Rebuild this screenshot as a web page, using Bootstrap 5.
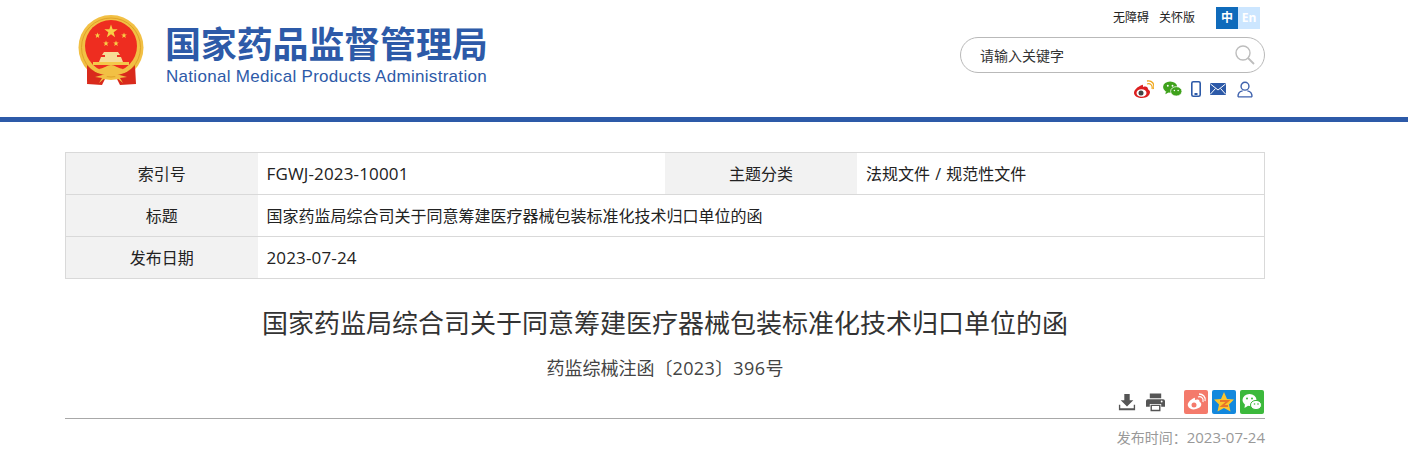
<!DOCTYPE html>
<html lang="zh-CN">
<head>
<meta charset="UTF-8">
<title>国家药品监督管理局</title>
<link href="https://cdn.jsdelivr.net/npm/bootstrap@5.3.3/dist/css/bootstrap.min.css" rel="stylesheet">
<style>
body { font-family: "Open Sans", "Noto Sans CJK SC", sans-serif; color: #333; background: #fff; overflow: hidden; }
.site-head { height: 122px; border-bottom: 5px solid #2d5aa8; }
.wrap { width: 1200px; margin-left: 65px; }
.head-inner { height: 117px; }
.emblem { margin-left: 13px; margin-top: 15px; }
.brand { margin-left: 21px; margin-top: 20px; color: #2d5aa8; }
.brand-cn { font-family: "Noto Sans CJK SC", sans-serif; font-weight: 700; font-size: 36px; line-height: 44px; width: 330px; white-space: nowrap; letter-spacing: -.15px; }
.brand-en { font-family: "Liberation Sans", sans-serif; font-size: 17px; line-height: 20px; letter-spacing: .3px; margin: 3px 0 0 1px; white-space: nowrap; }
.head-right { width: 305px; }
.top-links { height: 37px; padding-top: 7px; padding-right: 5px; font-size: 12px; line-height: 22px; color: #222; }
.top-links a { color: #222; text-decoration: none; margin-right: 10px; }
.lang { margin-left: 11px; display: flex; font-size: 12px; }
.lang span { width: 22px; height: 22px; text-align: center; }
.lang-on { background: #0f6bbb; color: #fff; font-weight: 700; }
.lang-off { background: #cce6ff; color: #fff; font-weight: 700; }
.search-box { height: 36px; border: 1px solid #b9b9b9; border-radius: 18px; padding: 0 9px 0 19px; font-size: 14px; color: #333; }
.head-icons { margin-top: 6px; padding-right: 12px; height: 20px; gap: 9px; }
.user-ico { margin-left: 2px; }
.info-tbl { margin-top: 30px; margin-bottom: 0; border-color: #d9d9d9; font-size: 16px; color: #222; table-layout: fixed; }
.info-tbl td, .info-tbl th { height: 42px; padding: 0 9px; vertical-align: middle; font-weight: 400; border-color: #d9d9d9; border-left-width: 0; border-right-width: 0; }
.info-tbl th { background: #f2f2f2; text-align: center; width: 192px; }
.info-tbl tr > :first-child { border-left-width: 1px; }
.info-tbl tr > :last-child { border-right-width: 1px; }
.num-val { font-size: 17px; letter-spacing: .15px; }
.cat-val { word-spacing: 1px; }
.art-title { font-family: "Noto Sans CJK SC", sans-serif; font-size: 26px; line-height: 36px; font-weight: 400; color: #333; margin: 25px 0 0; text-align: center; }
.art-num { font-size: 18px; line-height: 26px; color: #444; margin-top: 15px; text-align: center; }
.art-digits { letter-spacing: .45px; }
.tool-row { margin-top: 9px; padding-bottom: 4px; padding-right: 1px; border-bottom: 1px solid #a8a8a8; box-sizing: content-box; height: 24px; }
.print-ico { margin-left: 10px; margin-right: 19px; }
.share-ico { margin-left: 4px; }
.pub-time { font-size: 14px; line-height: 20px; color: #999; margin-top: 8px; text-align: right; }
.pub-date { font-size: 15px; }
</style>
</head>
<body>
<div class="site-head">
  <div class="wrap head-inner d-flex justify-content-between">
    <div class="d-flex align-items-start">
      <svg class="emblem" width="66" height="71" viewBox="0 0 66 71">
        <defs><polygon id="star" points="0,-1 .235,-.324 .951,-.309 .38,.124 .588,.809 0,.4 -.588,.809 -.38,.124 -.951,-.309 -.235,-.324"/></defs>
        <path d="M10 50 L9 69 L24 70 L28 62 L38 62 L42 70 L58 69 L57 50 Z" fill="#d92a1c"/>
        <circle cx="33" cy="32.500" r="32.500" fill="#f2c044"/>
        <circle cx="33" cy="32.500" r="29.500" fill="none" stroke="#dfa228" stroke-width="1"/>
        <circle cx="33" cy="31" r="26" fill="#ee2d20"/>
        <g fill="#f8d046">
          <use href="#star" transform="translate(33,16.500) scale(7)"/>
          <use href="#star" transform="translate(19.500,20.500) scale(3)"/>
          <use href="#star" transform="translate(46,20.500) scale(3)"/>
          <use href="#star" transform="translate(28,28.500) scale(3)"/>
          <use href="#star" transform="translate(38,28.500) scale(3)"/>
        </g>
        <path d="M26 37 H40 L42 40 H39 V42 H43 L45 47 H21 L23 42 H27 V40 H24 Z" fill="#f6dc96"/>
        <rect x="15" y="47" width="36" height="3" fill="#f4c84a"/>
        <path d="M9 50 C14 56 20 59 27 60 L24 68 L11 69 L9 66 Z" fill="#d92a1c"/>
        <path d="M57 50 C52 56 46 59 39 60 L42 68 L55 69 L57 66 Z" fill="#d92a1c"/>
        <path d="M33 50 C29 50 27 53 21 54 C24 59 29 58 33 58 C37 58 42 59 45 54 C39 53 37 50 33 50 Z" fill="#f2c044"/>
        <path d="M33 58 L21 68 L24 63 L17 62 L28 59 Z M33 58 L45 68 L42 63 L49 62 L38 59 Z" fill="#f2c044"/>
      </svg>
      <div class="brand">
        <div class="brand-cn">国家药品监督管理局</div>
        <div class="brand-en">National Medical Products Administration</div>
      </div>
    </div>
    <div class="head-right">
      <div class="top-links d-flex justify-content-end">
        <a href="#">无障碍</a><a href="#">关怀版</a>
        <div class="lang"><span class="lang-on">中</span><span class="lang-off">En</span></div>
      </div>
      <div class="search-box d-flex align-items-center justify-content-between">
        <span>请输入关键字</span>
        <svg width="20" height="20" viewBox="0 0 20 20" fill="none" stroke="#bdbdbd" stroke-width="1.4"><circle cx="8" cy="8" r="7"/><path d="M13 13 L19 19" stroke-width="1.8"/></svg>
      </div>
      <div class="head-icons d-flex justify-content-end align-items-center">
        <svg width="20" height="18" viewBox="0 0 20 18"><path d="M8 5 C3 7 0 10 0 13 C0 16 4 18 8 18 C13 18 16 15 16 12 C16 10 14 10 14 9 C14 7 12 6 9 7 C9 5 9 4.500 8 5 Z" fill="#dc1f1f"/><ellipse cx="7.500" cy="13" rx="5" ry="3.800" fill="#fff"/><circle cx="7" cy="13" r="2.500" fill="#444"/><path d="M13 4 C16 3 19 5 18 9 M13 1 C18 0 21 4 19.500 9" fill="none" stroke="#f0a81e" stroke-width="1.300"/></svg>
        <svg width="19" height="16" viewBox="0 0 20 17"><ellipse cx="7.500" cy="6.500" rx="7.500" ry="6" fill="#3fa21c"/><path d="M3 11 L2.500 14 L6 12 Z" fill="#3fa21c"/><ellipse cx="14" cy="11" rx="6" ry="5" fill="#3fa21c" stroke="#fff" stroke-width=".8"/><circle cx="5" cy="5" r="1" fill="#fff"/><circle cx="10" cy="5" r="1" fill="#fff"/><circle cx="12" cy="10" r=".8" fill="#fff"/><circle cx="16" cy="10" r=".8" fill="#fff"/></svg>
        <svg width="10" height="16" viewBox="0 0 10 16"><rect x=".8" y=".8" width="8.400" height="14.400" rx="1.500" fill="none" stroke="#2d5aa8" stroke-width="1.600"/><rect x="3.500" y="12" width="3" height="2" fill="#2d5aa8"/></svg>
        <svg width="16" height="12" viewBox="0 0 16 12"><rect width="16" height="12" rx="1" fill="#2d5aa8"/><path d="M0.500 1 L8 7 L15.500 1 M0.500 11 L5.500 5.500 M15.500 11 L10.500 5.500" fill="none" stroke="#fff" stroke-width="1"/></svg>
        <svg class="user-ico" width="16" height="17" viewBox="0 0 17 17" fill="none" stroke="#3f62ad" stroke-width="1.500"><circle cx="8.500" cy="5" r="4.200"/><path d="M1 16.300 C1 12 4 10.300 6 10 M16 16.300 C16 12 13 10.300 11 10 M1 16.300 H16"/></svg>
      </div>
    </div>
  </div>
</div>

<div class="wrap">
  <table class="table table-bordered info-tbl">
    <tr>
      <th>索引号</th><td class="num-val">FGWJ-2023-10001</td>
      <th>主题分类</th><td class="cat-val">法规文件 / 规范性文件</td>
    </tr>
    <tr>
      <th>标题</th><td colspan="3">国家药监局综合司关于同意筹建医疗器械包装标准化技术归口单位的函</td>
    </tr>
    <tr>
      <th>发布日期</th><td colspan="3" class="num-val">2023-07-24</td>
    </tr>
  </table>

  <h1 class="art-title">国家药监局综合司关于同意筹建医疗器械包装标准化技术归口单位的函</h1>
  <div class="art-num">药监综械注函〔<span class="art-digits">2023</span>〕<span class="art-digits">396</span>号</div>

  <div class="tool-row d-flex justify-content-end align-items-center">
    <svg width="18" height="19" viewBox="0 0 20 19"><path d="M7 0 H13 V7 H17 L10 14 L3 7 H7 Z M1 12 V18 H19 V12 H17.500 V16 H2.500 V12 Z" fill="#555"/></svg>
    <svg class="print-ico" width="19" height="19" viewBox="0 0 20 19"><path d="M4 0 H16 V5 H4 Z M2 6 H18 A2 2 0 0 1 20 8 V14 H16 V11 H4 V14 H0 V8 A2 2 0 0 1 2 6 Z" fill="#555"/><path d="M5.500 12.500 H14.500 V18 H5.500 Z" fill="#fff" stroke="#555" stroke-width="1.500"/><circle cx="16.500" cy="8.500" r="1" fill="#fff"/></svg>
    <svg width="24" height="24" viewBox="0 0 24 24"><rect width="24" height="24" rx="2" fill="#f47a6b"/><path d="M10 8 C6 10 3 13 4 16 C5 19 9 20 12 19 C16 18 18 16 17 13 C16.500 12 15 12 15.500 11 C15.500 9.500 13 9 11 10 C11 8 11 7.500 10 8 Z" fill="#fff"/><circle cx="10" cy="15" r="2.500" fill="#f47a6b"/><path d="M14 7 C17 6 20 8 19 12 M15 4 C19 4 22 7 21 11" fill="none" stroke="#fff" stroke-width="1.300"/></svg>
    <svg class="share-ico" width="24" height="24" viewBox="0 0 24 24"><rect width="24" height="24" rx="2" fill="#1388dd"/><polygon points="12,2 15,9 22,9.500 17,14.500 18.500,21.500 12,18 5.500,21.500 7,14.500 2,9.500 9,9" fill="#fbc52d"/><path d="M8 11 H16 L10 16 H16" fill="none" stroke="#e8762a" stroke-width="1.800"/></svg>
    <svg class="share-ico" width="24" height="24" viewBox="0 0 24 24"><rect width="24" height="24" rx="2" fill="#3cb93c"/><ellipse cx="9.500" cy="10" rx="7" ry="6" fill="#fff"/><path d="M5 14 L4.500 18 L8.500 15.500 Z" fill="#fff"/><ellipse cx="16" cy="15" rx="5.500" ry="4.600" fill="#fff" stroke="#3cb93c"/><circle cx="7" cy="8.500" r="1" fill="#3cb93c"/><circle cx="12" cy="8.500" r="1" fill="#3cb93c"/><circle cx="14.500" cy="14" r=".8" fill="#3cb93c"/><circle cx="18" cy="14" r=".8" fill="#3cb93c"/></svg>
  </div>
  <div class="pub-time">发布时间：<span class="pub-date">2023-07-24</span></div>
</div>
<script src="https://cdn.jsdelivr.net/npm/bootstrap@5.3.3/dist/js/bootstrap.bundle.min.js"></script>
</body>
</html>
